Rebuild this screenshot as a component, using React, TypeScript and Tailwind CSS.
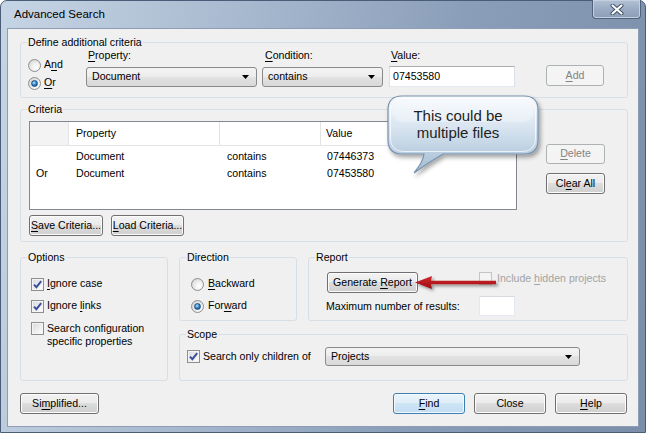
import React from "react";

type Kids = { children?: React.ReactNode };

const U = ({ children }: Kids) => <span className="underline underline-offset-[2px]">{children}</span>;

function Btn({ className = "", kind = "normal", children }: Kids & { className?: string; kind?: "normal" | "default" | "disabled" }) {
  const look =
    kind === "disabled"
      ? "border-[#adb2b5] bg-[#f4f4f4] text-[#838383]"
      : kind === "default"
        ? "border-[#3c7fb1] bg-[linear-gradient(to_bottom,#eaf4fb_0%,#dfeef9_49%,#cfe5f6_50%,#c1dcf1_100%)] shadow-[inset_0_0_0_1px_#f4f9fd]"
        : "border-[#707070] bg-[linear-gradient(to_bottom,#f2f2f2_0%,#ebebeb_49%,#dddddd_50%,#cfcfcf_100%)] shadow-[inset_0_0_0_1px_#fcfcfc]";
  return (
    <div className={`flex shrink-0 items-center justify-center rounded-[3px] border ${look} ${className}`}>{children}</div>
  );
}

function Combo({ className = "", text }: { className?: string; text: string }) {
  return (
    <div
      className={`flex items-center rounded-[3px] border border-[#8a8a8a] bg-[linear-gradient(to_bottom,#f4f4f4_0%,#ececec_49%,#e2e2e2_50%,#d9d9d9_100%)] pl-[5px] pr-[7px] ${className}`}
    >
      <span className="flex-1">{text}</span>
      <svg width="7" height="4" viewBox="0 0 7 4">
        <path d="M0 0H7L3.5 4Z" fill="#000" />
      </svg>
    </div>
  );
}

function Check({ checked = false, disabled = false }: { checked?: boolean; disabled?: boolean }) {
  return (
    <span
      className={`relative inline-flex h-[13px] w-[13px] shrink-0 items-center justify-center border ${
        disabled
          ? "border-[#c4c4c4] bg-[#f4f4f4]"
          : "border-[#8e8f8f] bg-[linear-gradient(135deg,#d6d8db_0%,#eeeeee_55%,#ffffff_100%)] shadow-[inset_0_0_0_1px_#f4f4f4]"
      }`}
    >
      {checked && (
        <svg width="11" height="11" viewBox="0 0 11 11">
          <path d="M2 5.6L4.4 8.2L9.2 2.2" fill="none" stroke="#3b4f9c" strokeWidth="2" />
        </svg>
      )}
    </span>
  );
}

function Radio({ checked = false }: { checked?: boolean }) {
  return (
    <span className="inline-flex h-[13px] w-[13px] shrink-0 items-center justify-center rounded-full border border-[#8e8f8f] bg-[radial-gradient(circle_at_65%_65%,#ffffff_0%,#f0f0f0_40%,#c9c9c9_100%)]">
      {checked && (
        <span className="h-[7px] w-[7px] rounded-full border border-[#1b5182] bg-[radial-gradient(circle_at_40%_35%,#bfe6ff_0%,#2c7fc2_50%,#0b4674_100%)]" />
      )}
    </span>
  );
}

function Group({ title, className = "", children }: Kids & { title: string; className?: string }) {
  return (
    <fieldset className={`min-w-0 rounded-[3px] border border-[#d5dfe5] ${className}`}>
      <legend className="ml-[6px] px-[1px] leading-[13px]">{title}</legend>
      {children}
    </fieldset>
  );
}

function Row({ c1, c2, c3, c4 }: { c1: string; c2: string; c3: string; c4: string }) {
  return (
    <div className="flex h-[17px] items-center">
      <div className="w-[39px] pl-[6px]">{c1}</div>
      <div className="w-[151px] pl-[7px]">{c2}</div>
      <div className="w-[101px] pl-[7px]">{c3}</div>
      <div className="pl-[6px]">{c4}</div>
    </div>
  );
}

export default function App() {
  return (
    <div className="relative flex h-[433px] w-[646px] flex-col rounded-t-[7px] border border-[#4a5d78] bg-[linear-gradient(100deg,#c6d5e5_0%,#a6b8ce_35%,#8b9eb9_65%,#7a8ea9_100%)] px-[6px] pb-[5px] font-['Liberation_Sans',Arial,sans-serif] text-[10.6px] text-black">
      <div className="flex h-[27px] items-center pl-[7px] pt-[1px] text-[11.5px]">Advanced Search</div>

      <div className="absolute right-[4px] top-[-1px] flex h-[19px] w-[49px] items-center justify-center rounded-b-[4px] border border-t-0 border-[#51627c] bg-[linear-gradient(to_bottom,#b3c2d5_0%,#9aabc3_50%,#8c9db7_100%)] shadow-[inset_0_0_0_1px_#c3d0e0]">
        <svg width="14" height="11" viewBox="0 0 14 11">
          <path d="M2.5 1.5L11.5 9.5M11.5 1.5L2.5 9.5" stroke="#3d4b62" strokeWidth="4" strokeLinecap="round" />
          <path d="M2.5 1.5L11.5 9.5M11.5 1.5L2.5 9.5" stroke="#ffffff" strokeWidth="2.2" strokeLinecap="round" />
        </svg>
      </div>

      <div className="flex flex-1 flex-col border border-[#8e9db3] bg-[#f0f0f0] pl-[12px] pr-[10px] pt-[7px]">
        <Group title="Define additional criteria" className="pb-[7px]">
          <div className="flex items-start">
            <div className="flex w-[65px] flex-col gap-[4px] pl-[7px] pt-[9px]">
              <div className="flex h-[14px] items-center gap-[3px]">
                <Radio />
                <span>
                  A<U>n</U>d
                </span>
              </div>
              <div className="flex h-[14px] items-center gap-[3px]">
                <Radio checked />
                <span>
                  <U>O</U>r
                </span>
              </div>
            </div>
            <div className="w-[171px]">
              <div className="h-[13px] pl-[2px] leading-[13px]">
                <U>P</U>roperty:
              </div>
              <Combo className="mt-[5px] h-[20px]" text="Document" />
            </div>
            <div className="ml-[5px] w-[121px]">
              <div className="h-[13px] pl-[3px] leading-[13px]">
                <U>C</U>ondition:
              </div>
              <Combo className="mt-[5px] h-[20px]" text="contains" />
            </div>
            <div className="ml-[6px] w-[126px]">
              <div className="h-[13px] pl-[2px] leading-[13px]">
                <U>V</U>alue:
              </div>
              <div className="mt-[4px] flex h-[21px] items-center border border-[#abadb3] border-x-[#dbdfe6] border-b-[#e3e9ef] bg-white pl-[3px]">
                07453580
              </div>
            </div>
            <Btn kind="disabled" className="ml-auto mr-[23px] mt-[16px] h-[21px] w-[58px]">
              <span>
                <U>A</U>dd
              </span>
            </Btn>
          </div>
        </Group>

        <Group title="Criteria" className="mt-[5px] pb-[5px]">
          <div className="flex items-start">
            <div className="pl-[8px] pt-[5px]">
              <div className="h-[89px] w-[488px] border border-[#828790] bg-white">
                <div className="flex h-[24px] border-b border-[#e5e5e5]">
                  <div className="w-[39px] border-r border-[#e3e3e3] bg-[#f3f3f3]" />
                  <div className="flex w-[151px] items-center border-r border-[#e3e3e3] pl-[7px]">Property</div>
                  <div className="w-[101px] border-r border-[#e3e3e3]" />
                  <div className="flex w-[120px] items-center border-r border-[#e3e3e3] pl-[5px]">Value</div>
                </div>
                <div className="pt-[2px]">
                  <Row c1="" c2="Document" c3="contains" c4="07446373" />
                  <Row c1="Or" c2="Document" c3="contains" c4="07453580" />
                </div>
              </div>
              <div className="mt-[5px] flex gap-[8px]">
                <Btn className="h-[21px] w-[74px]">
                  <span>
                    <U>S</U>ave Criteria...
                  </span>
                </Btn>
                <Btn className="h-[21px] w-[73px]">
                  <span>
                    <U>L</U>oad Criteria...
                  </span>
                </Btn>
              </div>
            </div>
            <div className="ml-auto mr-[22px] flex flex-col gap-[9px] pt-[28px]">
              <Btn kind="disabled" className="h-[20px] w-[59px]">
                <span>
                  <U>D</U>elete
                </span>
              </Btn>
              <Btn className="h-[21px] w-[59px]">
                <span>
                  Cl<U>e</U>ar All
                </span>
              </Btn>
            </div>
          </div>
        </Group>

        <div className="mt-[9px] flex gap-[11px]">
          <Group title="Options" className="h-[130px] w-[148px]">
            <div className="flex flex-col pl-[10px] pt-[13px]">
              <div className="flex h-[14px] items-center gap-[3px]">
                <Check checked />
                <span>
                  <U>I</U>gnore case
                </span>
              </div>
              <div className="mt-[8px] flex h-[14px] items-center gap-[3px]">
                <Check checked />
                <span>
                  Ignore <U>l</U>inks
                </span>
              </div>
              <div className="mt-[9px] flex items-start gap-[3px]">
                <Check />
                <span className="leading-[13px]">
                  Search configuration
                  <br />
                  specific properties
                </span>
              </div>
            </div>
          </Group>

          <div className="flex w-[449px] flex-col">
            <div className="flex gap-[11px]">
              <Group title="Direction" className="h-[70px] w-[118px]">
                <div className="flex flex-col pl-[11px] pt-[13px]">
                  <div className="flex h-[14px] items-center gap-[4px]">
                    <Radio />
                    <span>
                      <U>B</U>ackward
                    </span>
                  </div>
                  <div className="mt-[8px] flex h-[14px] items-center gap-[4px]">
                    <Radio checked />
                    <span>
                      For<U>w</U>ard
                    </span>
                  </div>
                </div>
              </Group>
              <Group title="Report" className="h-[70px] flex-1">
                <div className="pl-[17px] pt-[8px]">
                  <div className="flex items-start">
                    <Btn className="ml-[1px] h-[21px] w-[91px]">
                      <span>
                        Generate <U>R</U>eport
                      </span>
                    </Btn>
                    <div className="ml-[61px] flex h-[13px] items-center gap-[5px]">
                      <Check disabled />
                      <span className="text-[#a3a3a3]">
                        Include <U>h</U>idden projects
                      </span>
                    </div>
                  </div>
                  <div className="mt-[3px] flex h-[20px] items-center">
                    <div className="w-[153px] pt-[2px]">Maximum number of results:</div>
                    <div className="h-[20px] w-[36px] border border-[#e3e9ef] border-t-[#d6d9de] bg-white" />
                  </div>
                </div>
              </Group>
            </div>
            <Group title="Scope" className="mt-[7px] h-[53px]">
              <div className="flex items-center pl-[7px] pt-[6px]">
                <div className="flex w-[138px] items-center gap-[3px]">
                  <Check checked />
                  <span>Search only children of</span>
                </div>
                <Combo className="h-[19px] w-[255px]" text="Projects" />
              </div>
            </Group>
          </div>
        </div>

        <div className="mt-[12px] flex">
          <Btn className="h-[21px] w-[79px]">
            <span>
              Si<U>m</U>plified...
            </span>
          </Btn>
          <Btn kind="default" className="ml-auto h-[21px] w-[72px]">
            <span>
              <U>F</U>ind
            </span>
          </Btn>
          <Btn className="ml-[9px] h-[21px] w-[72px]">Close</Btn>
          <Btn className="ml-[9px] mr-[1px] h-[21px] w-[72px]">
            <span>
              <U>H</U>elp
            </span>
          </Btn>
        </div>
      </div>

      {/* callout bubble */}
      <svg width="162" height="90" viewBox="0 0 162 90" className="absolute left-[382px] top-[91px]">
        <defs>
          <linearGradient id="cg" x1="0" y1="0" x2="0" y2="1">
            <stop offset="0" stopColor="#f7fafd" />
            <stop offset="0.45" stopColor="#d5e2ee" />
            <stop offset="1" stopColor="#a2bbd2" />
          </linearGradient>
          <filter id="cs" x="-10%" y="-10%" width="130%" height="140%">
            <feDropShadow dx="2" dy="3" stdDeviation="2" floodColor="#000" floodOpacity="0.35" />
          </filter>
        </defs>
        <path
          d="M19 4H141Q155 4 155 18V48Q155 62 141 62H60Q46 70 31 81Q40 70 41 62H19Q5 62 5 48V18Q5 4 19 4Z"
          fill="url(#cg)"
          stroke="#7891ad"
          strokeWidth="1.2"
          filter="url(#cs)"
        />
        <rect x="7.5" y="6.5" width="145" height="53" rx="12" fill="none" stroke="#ffffff" strokeOpacity="0.7" />
        <rect x="9" y="8" width="142" height="22" rx="10" fill="#ffffff" fillOpacity="0.3" />
      </svg>
      <div className="absolute left-[382px] top-[106px] w-[150px] text-center font-['Liberation_Sans',Arial,sans-serif] text-[15px] leading-[17px] text-[#1e1e1e]">
        This could be
        <br />
        multiple files
      </div>

      {/* red arrow */}
      <svg width="92" height="24" viewBox="0 0 92 24" className="absolute left-[411px] top-[271px]">
        <defs>
          <linearGradient id="ag" x1="0" y1="0" x2="0" y2="1">
            <stop offset="0" stopColor="#d4292c" />
            <stop offset="1" stopColor="#9a0e12" />
          </linearGradient>
          <filter id="as" x="-10%" y="-30%" width="130%" height="180%">
            <feDropShadow dx="2" dy="2" stdDeviation="1.5" floodColor="#000" floodOpacity="0.4" />
          </filter>
        </defs>
        <path d="M3 10.5L20 4L19 8.8H84V12.2H19L20 17Z" fill="url(#ag)" filter="url(#as)" />
      </svg>
    </div>
  );
}
